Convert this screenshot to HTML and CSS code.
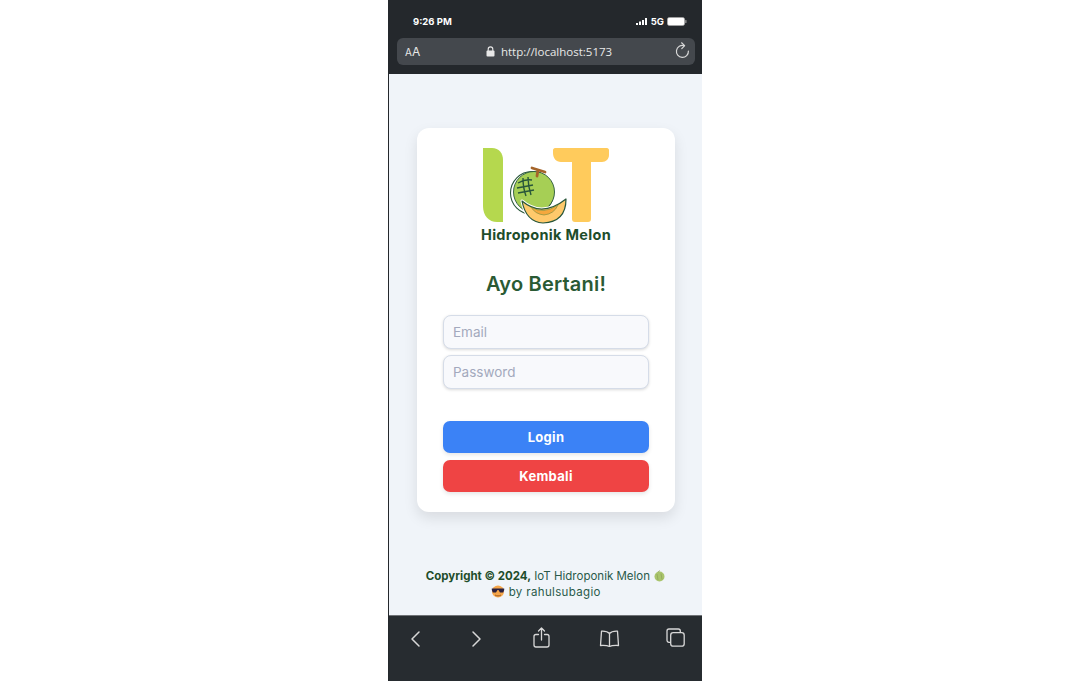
FILE: index.html
```html
<!DOCTYPE html>
<html lang="id">
<head>
  <meta charset="UTF-8" />
  <meta name="viewport" content="width=device-width, initial-scale=1.0"/>
  <title>IoT Hidroponik Melon</title>
  <link rel="stylesheet" href="styles.css">
</head>
<body>
  <div class="phone">
    <!-- barra de arriba -->
    <header class="top-bar">
      <div class="status">
        <span class="time">9:26 PM</span>
        <div class="status-right">
          <svg class="signal" width="12" height="7" viewBox="0 0 12 7"><g fill="#fff"><rect x="0" y="5" width="2" height="2"/><rect x="3" y="3.5" width="2" height="3.5"/><rect x="6" y="2" width="2" height="5"/><rect x="9" y="0" width="2" height="7"/></g></svg>
          <span class="net">5G</span>
          <svg class="battery" width="20" height="9" viewBox="0 0 20 9"><rect x="0.4" y="0.4" width="17.2" height="8.2" rx="2" fill="#fff" stroke="#aaa" stroke-width="0.6"/><rect x="18.2" y="3" width="1.3" height="3" rx="0.6" fill="#999"/></svg>
        </div>
      </div>
      <div class="url-bar">
        <span class="aa"><small>A</small>A</span>
        <div class="url">
          <svg width="9" height="11" viewBox="0 0 9 11"><path d="M2.2 5V3.2a2.3 2.3 0 0 1 4.6 0V5" fill="none" stroke="#e8e8e8" stroke-width="1.1"/><rect x="0.5" y="4.6" width="8" height="6" rx="1" fill="#e8e8e8"/></svg>
          <span>http://localhost:5173</span>
        </div>
        <svg class="reload" width="15" height="18" viewBox="0 0 15 18"><path d="M9.2 3.7A6 6 0 1 0 13.4 9" fill="none" stroke="#d8d8d8" stroke-width="1.2" stroke-linecap="round"/><path d="M6.6 0.8 9.6 3.6 6.8 6.6" fill="none" stroke="#d8d8d8" stroke-width="1.2" stroke-linecap="round" stroke-linejoin="round"/></svg>
      </div>
    </header>

    <main class="content">
      <section class="card">
        <div class="logo">
          <svg width="130" height="78" viewBox="0 0 130 78">
            <path d="M1 2h9c7 0 11 5 11 12v62h-6C7 76 1 70 1 60z" fill="#b5d84e"/>
            <path d="M71 4c0-1 1-2 2-2h52c1 0 2 1 2 2v5c0 4-3 7-7 7h-11v57c0 2-1 3-3 3H93c-2 0-3-1-3-3V16H79c-5 0-8-4-8-9z" fill="#ffcb5c"/>
            <circle cx="50" cy="47" r="21.500" fill="#fff" stroke="#28563a" stroke-width="1.100"/>
            <circle cx="52" cy="46" r="20.500" fill="#a6cf55" stroke="#28563a" stroke-width="0.900"/>
            <g fill="none" stroke="#28563a" stroke-width="1.400">
              <path d="M36 37Q43 33 50 34M35 42 51 39M36 47 52 44M41 32Q41 42 44 50M46 31Q46 40 49 49"/>
            </g>
            <path d="M40 55Q60 72 84 53Q84 76 61 77Q44 76 40 55Z" fill="#ffc96b" stroke="#fff" stroke-width="3" stroke-linejoin="round"/>
            <path d="M40 55Q60 72 84 53Q84 76 61 77Q44 76 40 55Z" fill="#ffc96b" stroke="#28563a" stroke-width="1.200" stroke-linejoin="round"/>
            <path d="M49 61Q61 69 76 59Q72 68 62 69Q53 68 49 61Z" fill="#f5a83d" stroke="#6f8a3a" stroke-width="0.600"/>
            <path d="M50 22 63 26M56 24 55 30" fill="none" stroke="#a5642a" stroke-width="2.800" stroke-linecap="round"/>
          </svg>
          <div class="brand">Hidroponik Melon</div>
        </div>
        <h1 class="title">Ayo Bertani!</h1>
        <form class="form">
          <input class="field" type="text" placeholder="Email">
          <input class="field" type="password" placeholder="Password">
          <button class="btn btn-login" type="button">Login</button>
          <button class="btn btn-back" type="button">Kembali</button>
        </form>
      </section>

      <footer class="copy">
        <div><b>Copyright © 2024,</b> IoT Hidroponik Melon
          <svg class="emoji" width="13" height="13" viewBox="0 0 13 13"><circle cx="6.5" cy="7.5" r="5" fill="#a9c46c"/><path d="M5 3 7 1.5M4 5l1 6M8 4.500l1 6" fill="none" stroke="#8ca257" stroke-width="0.7"/></svg>
        </div>
        <div class="by">
          <svg class="emoji" width="14" height="13" viewBox="0 0 14 13"><circle cx="7" cy="6.5" r="6" fill="#f6a64a"/><path d="M0.800 3.500h12.400v1.500l-1 2.500H9L7.500 5h-1L5 7.500H1.800l-1-2.500z" fill="#2b2140"/><path d="M4 10c2 1.200 4 1.200 6 0" fill="none" stroke="#8a4a1c" stroke-width="0.8"/></svg>
          by rahulsubagio
        </div>
      </footer>
    </main>

    <!-- barra de abajo -->
    <nav class="bottom-bar">
      <svg width="12" height="18" viewBox="0 0 12 18"><path d="M10 2 3 9l7 7" fill="none" stroke="#d8d8d8" stroke-width="1.500" stroke-linecap="round" stroke-linejoin="round"/></svg>
      <svg width="12" height="18" viewBox="0 0 12 18"><path d="M2 2l7 7-7 7" fill="none" stroke="#d8d8d8" stroke-width="1.500" stroke-linecap="round" stroke-linejoin="round"/></svg>
      <svg width="17" height="21" viewBox="0 0 17 21"><path d="M5.500 7.500H3a2 2 0 0 0-2 2V18a2 2 0 0 0 2 2h11a2 2 0 0 0 2-2V9.500a2 2 0 0 0-2-2h-2.500M8.500 13V1.500M5.500 4l3-3 3 3" fill="none" stroke="#d8d8d8" stroke-width="1.300" stroke-linecap="round" stroke-linejoin="round"/></svg>
      <svg width="21" height="17" viewBox="0 0 21 17"><path d="M10.500 3.500C9 1.800 6.500 1 2.500 1.200L1.500 15.500c4-.2 7.500.2 9 1 1.500-.8 5-1.200 9-1L18.500 1.200c-4-.2-6.500.6-8 2.300zM10.500 3.500v13" fill="none" stroke="#d8d8d8" stroke-width="1.300" stroke-linejoin="round"/></svg>
      <svg width="19" height="19" viewBox="0 0 19 19"><rect x="4.700" y="4.700" width="13.500" height="13.500" rx="2.500" fill="none" stroke="#d8d8d8" stroke-width="1.300"/><path d="M4.700 14.300H3A2 2 0 0 1 1 12.300V3A2 2 0 0 1 3 1h9.300a2 2 0 0 1 2 2v1.700" fill="none" stroke="#d8d8d8" stroke-width="1.300"/></svg>
    </nav>
  </div>
</body>
</html>
```

FILE: styles.css
```css
* {
  margin: 0;
  padding: 0;
  box-sizing: border-box;
}
html, body {
  width: 100%;
  height: 100%;
  overflow: hidden;
  background-color: #fff;
  font-family: "Inter", "Noto Sans", sans-serif;
}
body {
  display: flex;
  padding-left: 388px;
}
.phone {
  width: 314px;
  height: 681px;
  display: flex;
  flex-direction: column;
  border-left: 1px solid #24282c;
}
.top-bar {
  height: 74px;
  background-color: #24282c;
  flex-shrink: 0;
  padding: 0 7px 0 8px;
}
.status {
  height: 38px;
  display: flex;
  align-items: center;
  justify-content: space-between;
  padding: 4px 8px 0 16px;
  color: #fff;
  font-weight: 700;
  font-size: 9.500px;
}
.status-right {
  display: flex;
  align-items: center;
  gap: 3px;
}
.url-bar {
  height: 27px;
  background-color: #44484d;
  border-radius: 6px;
  display: flex;
  align-items: center;
  justify-content: space-between;
  padding: 0 5px 0 8px;
  color: #e8e8e8;
}
.aa {
  font-size: 12px;
  width: 30px;
}
.aa small {
  font-size: 10px;
}
.url {
  display: flex;
  align-items: center;
  gap: 6px;
  font-family: "Open Sans", sans-serif;
  font-size: 11.500px;
  margin-right: 12px;
}
.reload {
  margin-bottom: 2px;
}
.content {
  flex: 1;
  background-color: #f0f4f9;
  display: flex;
  flex-direction: column;
  align-items: center;
  padding: 54px 0 0 1px;
}
.card {
  width: 258px;
  height: 384px;
  background-color: #fff;
  border-radius: 12px;
  box-shadow: 0 6px 14px rgba(0, 0, 0, 0.1);
  padding: 18px 26px 0;
}
.logo {
  display: flex;
  flex-direction: column;
  align-items: center;
}
.logo svg {
  display: block;
  margin-left: 2px;
}
.brand {
  font-size: 14.500px;
  letter-spacing: 0.3px;
  font-weight: 700;
  color: #1e4d2b;
  margin-top: 2px;
  line-height: 18px;
}
.title {
  font-size: 20px;
  letter-spacing: 0.2px;
  font-weight: 600;
  color: #2a5a34;
  text-align: center;
  margin-top: 26px;
  line-height: 28px;
}
.form {
  display: flex;
  flex-direction: column;
  margin-top: 17px;
}
.field {
  height: 34px;
  border: 1px solid #d5dce8;
  border-radius: 8px;
  background-color: #f8f9fc;
  box-shadow: 0 1px 3px rgba(0, 0, 0, 0.15);
  padding: 0 9px;
  font-family: inherit;
  font-size: 13.500px;
  margin-bottom: 6px;
}
.field::placeholder {
  color: #a3a9bd;
}
.btn {
  height: 32px;
  border: 0;
  border-radius: 7px;
  color: #fff;
  font-family: inherit;
  font-size: 13px;
  letter-spacing: 0.3px;
  font-weight: 700;
  box-shadow: 0 2px 4px rgba(0, 0, 0, 0.1);
}
.btn-login {
  background-color: #3b82f6;
  margin-top: 26px;
}
.btn-back {
  background-color: #ef4444;
  margin-top: 7px;
}
.copy {
  margin-top: 56px;
  text-align: center;
  font-size: 11.500px;
  line-height: 16px;
  color: #2a5a4a;
}
.copy b {
  color: #1e4d2b;
}
.by {
  letter-spacing: 0.35px;
}
.emoji {
  vertical-align: -2px;
}
.bottom-bar {
  height: 66px;
  flex-shrink: 0;
  background-color: #272c30;
  border-top: 1px solid #6f7276;
  display: grid;
  grid-template-columns: 62px 62px 66px 67px auto;
  align-items: start;
  padding: 11px 0 0 20px;
}
.bottom-bar svg:nth-child(1), .bottom-bar svg:nth-child(2), .bottom-bar svg:nth-child(4) {
  margin-top: 3px;
}
.bottom-bar svg:nth-child(5) {
  margin-top: 1px;
}
```
